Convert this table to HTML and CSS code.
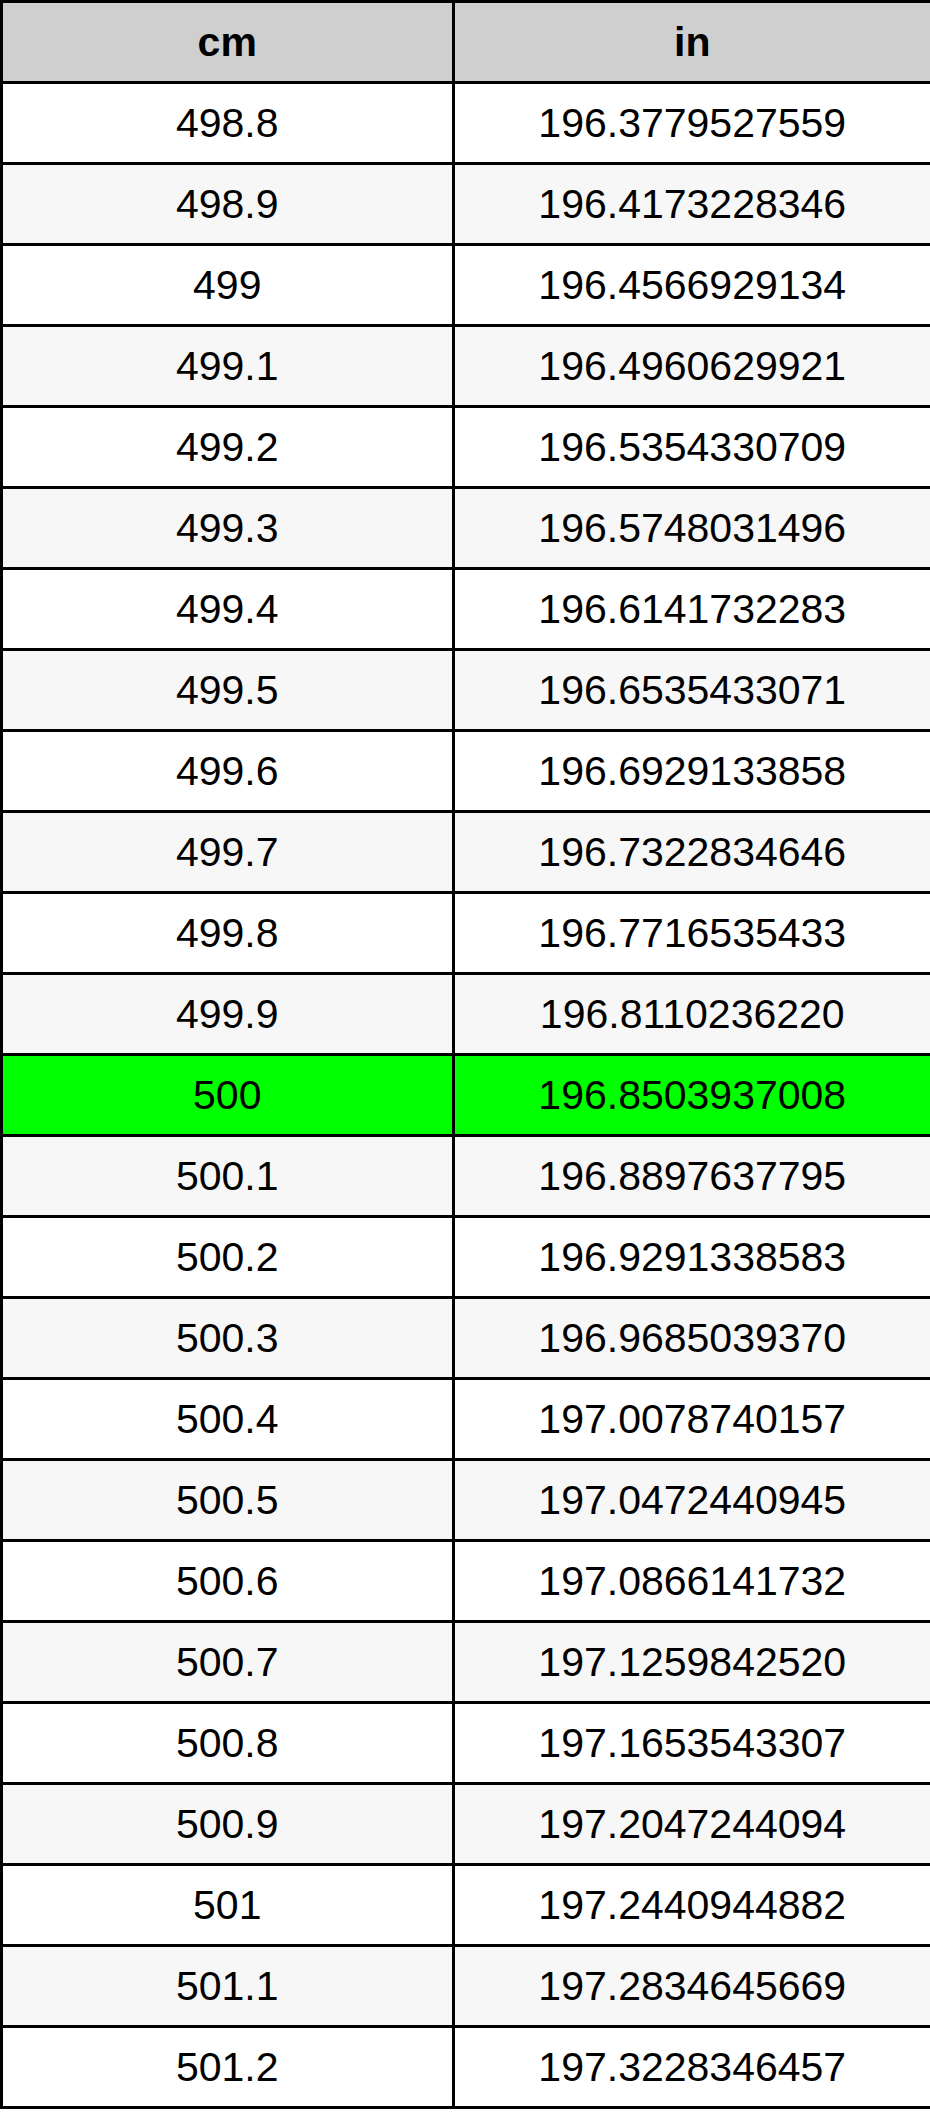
FILE: index.html
```html
<!DOCTYPE html>
<html>
<head>
<meta charset="utf-8">
<link rel="stylesheet" href="styles.css">
</head>
<body>
<table class="conv">
<colgroup><col class="col-cm"><col class="col-in"></colgroup>
<thead>
<tr><th>cm</th><th>in</th></tr>
</thead>
<tbody>
<tr><td>498.8</td><td>196.3779527559</td></tr>
<tr><td>498.9</td><td>196.4173228346</td></tr>
<tr><td>499</td><td>196.4566929134</td></tr>
<tr><td>499.1</td><td>196.4960629921</td></tr>
<tr><td>499.2</td><td>196.5354330709</td></tr>
<tr><td>499.3</td><td>196.5748031496</td></tr>
<tr><td>499.4</td><td>196.6141732283</td></tr>
<tr><td>499.5</td><td>196.6535433071</td></tr>
<tr><td>499.6</td><td>196.6929133858</td></tr>
<tr><td>499.7</td><td>196.7322834646</td></tr>
<tr><td>499.8</td><td>196.7716535433</td></tr>
<tr><td>499.9</td><td>196.8110236220</td></tr>
<tr class="hl"><td>500</td><td>196.8503937008</td></tr>
<tr><td>500.1</td><td>196.8897637795</td></tr>
<tr><td>500.2</td><td>196.9291338583</td></tr>
<tr><td>500.3</td><td>196.9685039370</td></tr>
<tr><td>500.4</td><td>197.0078740157</td></tr>
<tr><td>500.5</td><td>197.0472440945</td></tr>
<tr><td>500.6</td><td>197.0866141732</td></tr>
<tr><td>500.7</td><td>197.1259842520</td></tr>
<tr><td>500.8</td><td>197.1653543307</td></tr>
<tr><td>500.9</td><td>197.2047244094</td></tr>
<tr><td>501</td><td>197.2440944882</td></tr>
<tr><td>501.1</td><td>197.2834645669</td></tr>
<tr><td>501.2</td><td>197.3228346457</td></tr>
</tbody>
</table>
</body>
</html>
```
FILE: styles.css
```css
html, body {
  margin: 0;
  padding: 0;
  background: #ffffff;
}

.conv {
  border-collapse: collapse;
  table-layout: fixed;
  width: 930px;
  border: 3px solid #000;
  font-family: "Liberation Sans", Arial, sans-serif;
  font-size: 41px;
  color: #000;
}

.col-cm { width: 451.5px; }
.col-in { width: 478.5px; }

.conv th,
.conv td {
  border: 3px solid #000;
  padding: 0;
  height: 78px;
  text-align: center;
  vertical-align: middle;
  line-height: 1;
}

.conv th {
  background: #cfcfcf;
  font-weight: bold;
}

.conv tbody tr:nth-child(odd) td { background: #ffffff; }
.conv tbody tr:nth-child(even) td { background: #f7f7f7; }
.conv tbody tr.hl td { background: #00ff00; }
```
